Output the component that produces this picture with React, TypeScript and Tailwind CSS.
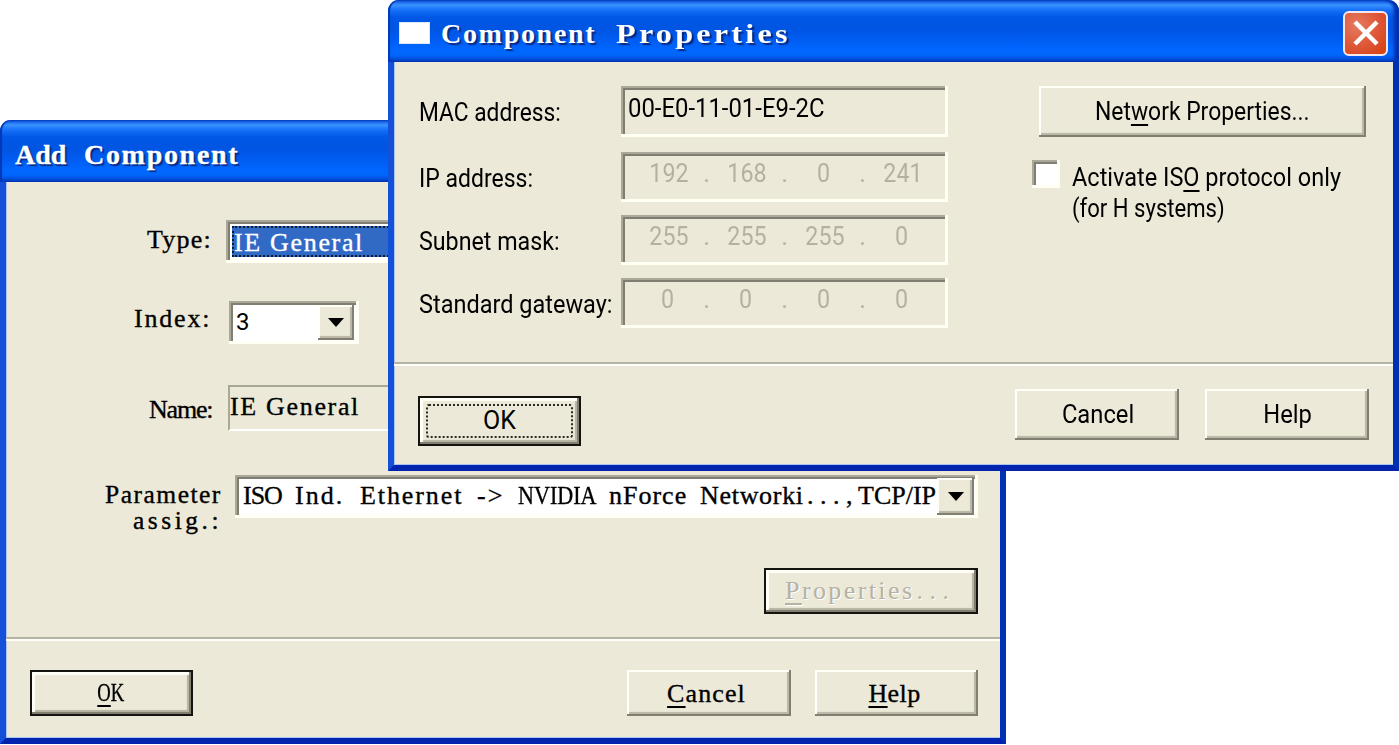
import type { ReactNode } from "react";

const RAISED =
  "bg-[#ece9d8] shadow-[inset_-2px_-2px_0_#827f72,inset_2px_2px_0_#fffff8,inset_-4px_-4px_1px_#b9b6a6]";
const RAISED_DEFAULT =
  "border-2 border-[#14130f] bg-[#ece9d8] shadow-[inset_-2px_-2px_0_#827f72,inset_3px_3px_1px_#fffff8,inset_-4px_-4px_1px_#b5b2a2]";
const SUNKEN =
  "shadow-[inset_-3px_-3px_0_#fffff4,inset_2px_2px_0_#aaa899,inset_4px_4px_0_#807e71]";

const OCTETS = [
  { label: "IP address:", labelClass: "scale-x-[0.92]", value: ["192", "168", "0", "241"] },
  { label: "Subnet mask:", labelClass: "scale-x-[0.93]", value: ["255", "255", "255", "0"] },
  { label: "Standard gateway:", labelClass: "scale-x-[0.94]", value: ["0", "0", "0", "0"] },
];

const PARAMETER_WORDS = [
  { text: "ISO", className: "w-[52px] tracking-[-1px]" },
  { text: "Ind.", className: "w-[65px] tracking-[2px]" },
  { text: "Ethernet", className: "w-[117px] tracking-[1.9px]" },
  { text: "->", className: "w-[41px] tracking-[2px]" },
  { text: "NVIDIA", className: "w-[91px] origin-left scale-x-[0.85]" },
  { text: "nForce", className: "w-[91px] tracking-[1px]" },
  { text: "Networki", className: "w-[104px] tracking-[0.7px]" },
  { text: "...,", className: "w-[54px] pl-[3px] tracking-[6.5px]" },
  { text: "TCP/IP", className: "w-[78px]" },
];

function Arrow({ className }: { className: string }) {
  return (
    <span className={`flex items-center justify-center ${RAISED} ${className}`}>
      <svg width="16" height="9" viewBox="0 0 16 9">
        <path d="M0 0h16L8 9z" fill="#000" />
      </svg>
    </span>
  );
}

function TitleBar({ children }: { children: ReactNode }) {
  return (
    <header className="flex h-[62px] shrink-0 items-center rounded-t-[11px] bg-[linear-gradient(to_bottom,#0a48c8_0px,#1c6af0_2px,#3a93ff_5px,#1670f8_10px,#0058e6_17px,#0055e2_28px,#005cf2_40px,#0068ff_50px,#0066fc_55px,#0050dc_59px,#0038b4_62px)] text-white shadow-[inset_2px_0_1px_#0038b8,inset_-5px_0_3px_#0030b0]">
      {children}
    </header>
  );
}

function Frame({ children }: { children: ReactNode }) {
  return (
    <div className="flex flex-1 flex-col border-x-[6px] border-b-[6px] border-r-[#0030b4] border-b-[#0024ae] border-l-[#1450d8] bg-[#ece9d8] shadow-[inset_1px_-1px_0_#a8c4f4]">
      {children}
    </div>
  );
}

function Separator() {
  return <div className="h-[4px] shrink-0 border-t-2 border-b-2 border-t-[#b5b3a3] border-b-[#fffffa]" />;
}

function AddComponent() {
  return (
    <section className="absolute top-[120px] left-0 flex h-[624px] w-[1006px] flex-col font-['Liberation_Serif',serif] text-[26px] leading-[30px] text-black [-webkit-text-stroke:0.35px]">
      <TitleBar>
        <h1 className="flex pt-[7px] pl-[15px] text-[28px] font-bold [text-shadow:2px_2px_1px_#0a2a80]">
          <span className="w-[69px]">Add</span>
          <span className="tracking-[1.7px]">Component</span>
        </h1>
      </TitleBar>
      <Frame>
        <div className="mt-[38px] flex h-[43px]">
          <span className="ml-[141px] w-[79px] pt-[5px] tracking-[1.2px]">Type:</span>
          <div className={`flex-1 bg-white p-[6px] ${SUNKEN}`}>
            <div className="h-[31px] border-2 border-dotted border-[#0c1c30] bg-[#316ac5] leading-[29px] tracking-[1.67px] text-white">
              IE General
            </div>
          </div>
          <span className="w-[22px]" />
        </div>

        <div className="mt-[38px] flex h-[43px]">
          <span className="ml-[128px] w-[95px] pt-[3px] tracking-[1.8px]">Index:</span>
          <div className={`flex w-[130px] justify-between bg-white py-[4px] pr-[5px] pl-[7px] ${SUNKEN}`}>
            <span className="pt-[2px] font-['Roboto',sans-serif] text-[24px] [-webkit-text-stroke:0px]">3</span>
            <Arrow className="h-[35px] w-[36px]" />
          </div>
        </div>

        <div className="mt-[41px] flex h-[46px]">
          <span className="ml-[143px] w-[79px] pt-[10px] tracking-[-1.2px]">Name:</span>
          <div className="flex-1 border-2 border-t-[#a9a797] border-r-white border-b-white border-l-[#a9a797] pt-[5px] tracking-[1.67px]">
            IE General
          </div>
          <span className="w-[22px]" />
        </div>

        <div className="mt-[44px] flex h-[43px]">
          <div className="ml-[99px] flex w-[130px] flex-col pt-[7px] text-[25.5px] leading-[26px]">
            <span className="tracking-[1.5px]">Parameter</span>
            <span className="pl-[28px] tracking-[3.5px]">assig.:</span>
          </div>
          <div className={`flex w-[743px] bg-white py-[3px] pr-[4px] pl-[8px] ${SUNKEN}`}>
            <div className="flex w-[694px] pt-[3px] whitespace-nowrap">
              {PARAMETER_WORDS.map((word) => (
                <span key={word.text} className={`shrink-0 ${word.className}`}>
                  {word.text}
                </span>
              ))}
            </div>
            <Arrow className="h-[37px] w-[37px]" />
          </div>
        </div>

        <button
          type="button"
          disabled
          className={`mt-[50px] mr-[22px] flex h-[46px] w-[214px] self-end pt-[6px] pl-[19px] text-[#b5b2a3] [-webkit-text-stroke:0px] [text-shadow:1px_1px_0_#fff] ${RAISED_DEFAULT}`}
        >
          <span className="tracking-[2.4px]">
            <span className="underline decoration-2 underline-offset-4">P</span>roperties
          </span>
          <span className="pl-[2px] tracking-[6.5px]">...</span>
        </button>

        <div className="mt-[23px]">
          <Separator />
        </div>

        <div className="mt-[29px] flex pr-[22px] pl-[24px]">
          <button type="button" className={`mr-auto h-[46px] w-[163px] pr-[2px] ${RAISED_DEFAULT}`}>
            <span className="inline-block scale-x-[0.72]">
              <span className="underline decoration-2 underline-offset-4">O</span>K
            </span>
          </button>
          <button type="button" className={`mr-[24px] h-[46px] w-[164px] pt-px pr-[5px] tracking-[1.1px] ${RAISED}`}>
            <span className="underline decoration-2 underline-offset-4">C</span>ancel
          </button>
          <button type="button" className={`h-[46px] w-[163px] pt-px pr-[4px] tracking-[0.4px] ${RAISED}`}>
            <span className="underline decoration-2 underline-offset-4">H</span>elp
          </button>
        </div>
      </Frame>
    </section>
  );
}

function ComponentProperties() {
  return (
    <section className="absolute top-0 left-[388px] flex h-[471px] w-[1011px] flex-col font-['Roboto',sans-serif] text-[25px] leading-[30px] whitespace-nowrap text-black">
      <TitleBar>
        <span className="mt-[3px] ml-[11px] h-[22px] w-[31px] border border-[#dce8ff] bg-white" />
        <h1 className="flex pt-[6px] pl-[11px] font-['Liberation_Serif',serif] text-[28px] font-bold [text-shadow:2px_2px_1px_#0a2a80]">
          <span className="w-[175px] tracking-[1.7px]">Component</span>
          <span className="origin-left scale-x-[1.15] tracking-[2.8px]">Properties</span>
        </h1>
        <button
          type="button"
          aria-label="Close"
          className="mt-[4px] mr-[11px] ml-auto flex h-[45px] w-[45px] items-center justify-center rounded-[6px] border-2 border-[#f4e8ee] bg-[radial-gradient(circle_at_30%_30%,#e67a60,#dc5232_60%,#d8400c)]"
        >
          <svg width="26" height="26" viewBox="0 0 26 26">
            <path d="M2 2l22 22M24 2L2 24" stroke="#fff" strokeWidth="4.5" />
          </svg>
        </button>
      </TitleBar>
      <Frame>
        <div className="flex h-[300px]">
          <div className="ml-[25px] w-[529px]">
            <div className="mt-[24px] flex h-[51px]">
              <span className="w-[202px] pt-[12px]">
                <span className="inline-block origin-left scale-x-[0.91]">MAC address:</span>
              </span>
              <div className={`w-[327px] pt-[8px] pl-[7px] ${SUNKEN}`}>
                <span className="inline-block origin-left scale-x-[0.955]">00-E0-11-01-E9-2C</span>
              </div>
            </div>

            {OCTETS.map((row) => (
              <div key={row.label} className="mt-[13px] flex h-[50px] nth-2:mt-[15px]">
                <span className="w-[202px] pt-[12px]">
                  <span className={`inline-block origin-left ${row.labelClass}`}>{row.label}</span>
                </span>
                <div className={`flex w-[327px] pt-[7px] pl-[27px] text-[#b4b1a2] ${SUNKEN}`}>
                  {row.value.map((octet, i) => (
                    <div key={i} className="flex w-[78.5px] text-center">
                      <span className="w-[39px] scale-x-[0.93]">{octet}</span>
                      {i < 3 && <span className="w-[39px]">.</span>}
                    </div>
                  ))}
                </div>
              </div>
            ))}
          </div>

          <div className="ml-[84px] w-[340px] pt-[24px]">
            <button type="button" className={`ml-[7px] h-[51px] w-[327px] ${RAISED}`}>
              <span className="inline-block scale-x-[0.915]">
                Net<span className="underline decoration-2 underline-offset-4">w</span>ork Properties...
              </span>
            </button>
            <label className="mt-[23px] flex">
              <span className={`h-[28px] w-[28px] shrink-0 bg-white ${SUNKEN}`} />
              <span className="ml-[12px] origin-left scale-x-[0.94] pt-[2px] leading-[31px]">
                Activate IS<span className="underline decoration-2 underline-offset-4">O</span> protocol only
                <br />
                <span className="inline-block origin-left scale-x-[0.94]">(for H systems)</span>
              </span>
            </label>
          </div>
        </div>

        <Separator />

        <div className="flex pr-[24px] pl-[24px]">
          <button type="button" className={`mt-[30px] mr-auto h-[50px] w-[163px] p-[6px] ${RAISED_DEFAULT}`}>
            <span className="block h-[34px] rounded-[3px] border-2 border-dotted border-[#2a2923]">OK</span>
          </button>
          <button type="button" className={`mt-[23px] mr-[26px] h-[51px] w-[164px] pl-[2px] ${RAISED}`}>
            <span className="inline-block scale-x-[0.95]">Cancel</span>
          </button>
          <button type="button" className={`mt-[23px] h-[51px] w-[164px] pl-px ${RAISED}`}>
            <span className="inline-block scale-x-[0.95]">Help</span>
          </button>
        </div>
      </Frame>
    </section>
  );
}

export default function App() {
  return (
    <main className="relative h-[745px] w-[1399px] overflow-hidden bg-white">
      <AddComponent />
      <ComponentProperties />
    </main>
  );
}
